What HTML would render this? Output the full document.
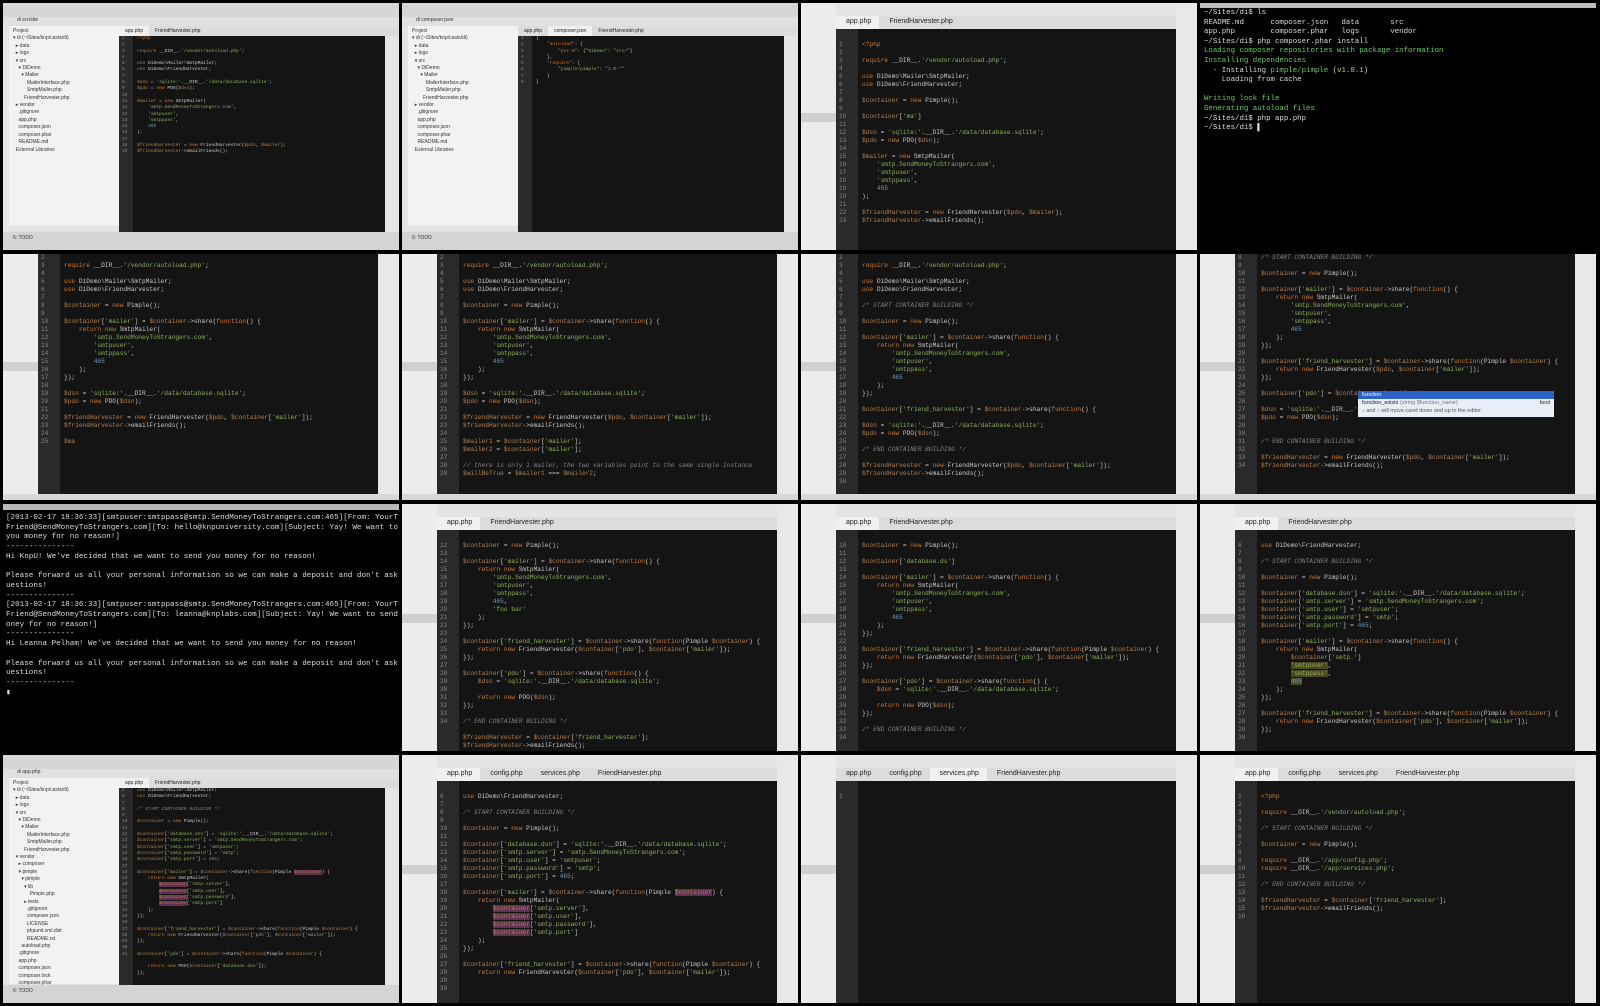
<!DOCTYPE html>
<html><head><meta charset="utf-8"><style>
*{margin:0;padding:0;box-sizing:border-box}
body{width:1600px;height:1006px;background:#000;position:relative;overflow:hidden;font-family:"Liberation Sans",sans-serif}
.c{position:absolute;width:396px;height:247px;overflow:hidden;background:#e4e4e4}
.term{background:#000;color:#ddd;font-family:"Liberation Mono",monospace}
.ls{position:absolute;left:0;top:0;width:35px;height:100%;background:#ececec}
.ls i{position:absolute;left:0;width:35px;height:9px;background:#d0d0d0;top:110px}
.tabs{position:absolute;left:35px;top:13px;right:0;height:13px;background:#dcdcdc;font-size:7px;color:#222}
.tabs span{display:inline-block;padding:2px 8px 0 10px;height:13px}
.tabs span.a{background:#f0f0f0}
.gut{position:absolute;left:35px;width:22px;bottom:6px;background:#2a2a2a;font:6px/8px "Liberation Mono",monospace;color:#888;padding-left:3px;white-space:pre;overflow:hidden}
.code{position:absolute;left:57px;right:21px;bottom:6px;background:#141414;font:6.2px/8px "Liberation Mono",monospace;color:#c8c8c8;padding-left:4px;white-space:pre;overflow:hidden}
.tt{top:26px!important;padding-top:12px;bottom:0!important}
.rs{position:absolute;right:0;top:0;width:21px;height:100%;background:#e8e8e8}
.bb{position:absolute;left:0;right:0;bottom:0;height:6px;background:#d8d8d8}
.k{color:#cc7832}.v{color:#b08050}.s{color:#8fae5a}.m{color:#808080;font-style:italic}.n{color:#6897bb}
.tb{position:absolute;left:0;top:0;width:100%;height:14px;background:#d6d6d6}
.nb{position:absolute;left:0;top:14px;width:100%;height:9px;background:#e0e0e0;font-size:5px;padding-left:14px;color:#333}
.pt{position:absolute;left:6px;top:23px;width:110px;height:200px;background:#f2f2f2;font:5px/7.4px "Liberation Sans",sans-serif;color:#333;padding:2px 0 0 4px;white-space:pre}
.ide .code{left:130px;right:14px;top:33px;bottom:18px;font-size:4.6px;line-height:6.3px}
.ide .gut{left:116px;width:14px;top:33px;bottom:18px;font-size:4.4px;line-height:6.3px}
.ide .tabs{left:116px;top:23px;height:10px;font-size:5px}
.ide .tabs span{padding:2px 6px 0;height:10px}
.sb{position:absolute;left:0;right:0;bottom:0;height:18px;background:#d4d4d4;font-size:5px;padding:3px 10px;color:#333}
</style></head><body>

<!-- Row 1 -->
<div class="c ide" style="left:3px;top:3px">
<div class="tb"></div><div class="nb">di  src/site</div>
<div class="pt">Project
▾ di (~/Sites/knp/casts/di)
  ▸ data
  ▸ logs
  ▾ src
    ▾ DiDemo
      ▾ Mailer
          MailerInterface.php
          SmtpMailer.php
        FriendHarvester.php
  ▸ vendor
    .gitignore
    app.php
    composer.json
    composer.phar
    README.md
  External Libraries</div>
<div class="tabs"><span class="a">app.php</span><span>FriendHarvester.php</span></div>
<div class="gut">1
2
3
4
5
6
7
8
9
10
11
12
13
14
15
16
17
18
19</div>
<div class="code"><span class="k">&lt;?php</span>

<span class="k">require</span> __DIR__.<span class="s">'/vendor/autoload.php'</span>;

<span class="k">use</span> DiDemo\Mailer\SmtpMailer;
<span class="k">use</span> DiDemo\FriendHarvester;

<span class="v">$dsn</span> = <span class="s">'sqlite:'</span>.__DIR__.<span class="s">'/data/database.sqlite'</span>;
<span class="v">$pdo</span> = <span class="k">new</span> PDO(<span class="v">$dsn</span>);

<span class="v">$mailer</span> = <span class="k">new</span> SmtpMailer(
    <span class="s">'smtp.SendMoneyToStrangers.com'</span>,
    <span class="s">'smtpuser'</span>,
    <span class="s">'smtppass'</span>,
    <span class="n">465</span>
);

<span class="v">$friendHarvester</span> = <span class="k">new</span> FriendHarvester(<span class="v">$pdo</span>, <span class="v">$mailer</span>);
<span class="v">$friendHarvester</span>-&gt;emailFriends();</div>
<div class="sb">6: TODO</div>
</div>

<div class="c ide" style="left:402px;top:3px">
<div class="tb"></div><div class="nb">di  composer.json</div>
<div class="pt">Project
▾ di (~/Sites/knp/casts/di)
  ▸ data
  ▸ logs
  ▾ src
    ▾ DiDemo
      ▾ Mailer
          MailerInterface.php
          SmtpMailer.php
        FriendHarvester.php
  ▸ vendor
    .gitignore
    app.php
    composer.json
    composer.phar
    README.md
  External Libraries</div>
<div class="tabs"><span>app.php</span><span class="a">composer.json</span><span>FriendHarvester.php</span></div>
<div class="gut">1
2
3
4
5
6
7
8</div>
<div class="code">{
    <span class="k">"autoload"</span>: {
        <span class="k">"psr-0"</span>: {<span class="s">"DiDemo"</span>: <span class="s">"src/"</span>}
    },
    <span class="k">"require"</span>: {
        <span class="s">"pimple/pimple"</span>: <span class="s">"1.0.*"</span>
    }
}</div>
<div class="sb">6: TODO</div>
</div>

<div class="c" style="left:801px;top:3px">
<div class="ls"><i></i></div><div class="tabs"><span class="a">app.php</span><span>FriendHarvester.php</span></div>
<div class="gut tt">1
2
3
4
5
6
7
8
9
10
11
12
13
14
15
16
17
18
19
20
21
22
23</div>
<div class="code tt"><span class="k">&lt;?php</span>

<span class="k">require</span> __DIR__.<span class="s">'/vendor/autoload.php'</span>;

<span class="k">use</span> DiDemo\Mailer\SmtpMailer;
<span class="k">use</span> DiDemo\FriendHarvester;

<span class="v">$container</span> = <span class="k">new</span> Pimple();

<span class="v">$container</span>[<span class="s">'ma'</span>]

<span class="v">$dsn</span> = <span class="s">'sqlite:'</span>.__DIR__.<span class="s">'/data/database.sqlite'</span>;
<span class="v">$pdo</span> = <span class="k">new</span> PDO(<span class="v">$dsn</span>);

<span class="v">$mailer</span> = <span class="k">new</span> SmtpMailer(
    <span class="s">'smtp.SendMoneyToStrangers.com'</span>,
    <span class="s">'smtpuser'</span>,
    <span class="s">'smtppass'</span>,
    <span class="n">465</span>
);

<span class="v">$friendHarvester</span> = <span class="k">new</span> FriendHarvester(<span class="v">$pdo</span>, <span class="v">$mailer</span>);
<span class="v">$friendHarvester</span>-&gt;emailFriends();</div>
<div class="rs"></div>
</div>

<div class="c term" style="left:1200px;top:3px;font-size:7.4px;line-height:9.6px;padding:6px 4px;white-space:pre"><div style="position:absolute;left:0;top:0;width:100%;height:5px;background:#bbb"></div>~/Sites/di$ ls
README.md      composer.json   data       src
app.php        composer.phar   logs       vendor
~/Sites/di$ php composer.phar install
<span style="color:#6c6">Loading composer repositories with package information
Installing dependencies</span>
  - Installing <span style="color:#6c6">pimple/pimple</span> (<span style="color:#cc6">v1.0.1</span>)
    Loading from cache

<span style="color:#6c6">Writing lock file
Generating autoload files</span>
~/Sites/di$ php app.php
~/Sites/di$ ▌</div>

<!-- Row 2 -->
<div class="c" style="left:3px;top:254px;height:246px">
<div class="ls"><i style="top:108px"></i></div>
<div class="gut" style="top:0">2
3
4
5
6
7
8
9
10
11
12
13
14
15
16
17
18
19
20
21
22
23
24
25</div>
<div class="code" style="top:0">
<span class="k">require</span> __DIR__.<span class="s">'/vendor/autoload.php'</span>;

<span class="k">use</span> DiDemo\Mailer\SmtpMailer;
<span class="k">use</span> DiDemo\FriendHarvester;

<span class="v">$container</span> = <span class="k">new</span> Pimple();

<span class="v">$container</span>[<span class="s">'mailer'</span>] = <span class="v">$container</span>-&gt;share(<span class="k">function</span>() {
    <span class="k">return new</span> SmtpMailer(
        <span class="s">'smtp.SendMoneyToStrangers.com'</span>,
        <span class="s">'smtpuser'</span>,
        <span class="s">'smtppass'</span>,
        <span class="n">465</span>
    );
});

<span class="v">$dsn</span> = <span class="s">'sqlite:'</span>.__DIR__.<span class="s">'/data/database.sqlite'</span>;
<span class="v">$pdo</span> = <span class="k">new</span> PDO(<span class="v">$dsn</span>);

<span class="v">$friendHarvester</span> = <span class="k">new</span> FriendHarvester(<span class="v">$pdo</span>, <span class="v">$container</span>[<span class="s">'mailer'</span>]);
<span class="v">$friendHarvester</span>-&gt;emailFriends();

<span class="v">$ma</span></div>
<div class="rs"></div><div class="bb"></div>
</div>

<div class="c" style="left:402px;top:254px;height:246px">
<div class="ls"><i style="top:108px"></i></div>
<div class="gut" style="top:0">2
3
4
5
6
7
8
9
10
11
12
13
14
15
16
17
18
19
20
21
22
23
24
25
26
27
28
29</div>
<div class="code" style="top:0">
<span class="k">require</span> __DIR__.<span class="s">'/vendor/autoload.php'</span>;

<span class="k">use</span> DiDemo\Mailer\SmtpMailer;
<span class="k">use</span> DiDemo\FriendHarvester;

<span class="v">$container</span> = <span class="k">new</span> Pimple();

<span class="v">$container</span>[<span class="s">'mailer'</span>] = <span class="v">$container</span>-&gt;share(<span class="k">function</span>() {
    <span class="k">return new</span> SmtpMailer(
        <span class="s">'smtp.SendMoneyToStrangers.com'</span>,
        <span class="s">'smtpuser'</span>,
        <span class="s">'smtppass'</span>,
        <span class="n">465</span>
    );
});

<span class="v">$dsn</span> = <span class="s">'sqlite:'</span>.__DIR__.<span class="s">'/data/database.sqlite'</span>;
<span class="v">$pdo</span> = <span class="k">new</span> PDO(<span class="v">$dsn</span>);

<span class="v">$friendHarvester</span> = <span class="k">new</span> FriendHarvester(<span class="v">$pdo</span>, <span class="v">$container</span>[<span class="s">'mailer'</span>]);
<span class="v">$friendHarvester</span>-&gt;emailFriends();

<span class="v">$mailer1</span> = <span class="v">$container</span>[<span class="s">'mailer'</span>];
<span class="v">$mailer2</span> = <span class="v">$container</span>[<span class="s">'mailer'</span>];

<span class="m">// there is only 1 mailer, the two variables point to the same single instance</span>
<span class="v">$willBeTrue</span> = <span class="v">$mailer1</span> === <span class="v">$mailer2</span>;</div>
<div class="rs"></div><div class="bb"></div>
</div>

<div class="c" style="left:801px;top:254px;height:246px">
<div class="ls"><i style="top:108px"></i></div>
<div class="gut" style="top:0">2
3
4
5
6
7
8
9
10
11
12
13
14
15
16
17
18
19
20
21
22
23
24
25
26
27
28
29
30</div>
<div class="code" style="top:0">
<span class="k">require</span> __DIR__.<span class="s">'/vendor/autoload.php'</span>;

<span class="k">use</span> DiDemo\Mailer\SmtpMailer;
<span class="k">use</span> DiDemo\FriendHarvester;

<span class="m">/* START CONTAINER BUILDING */</span>

<span class="v">$container</span> = <span class="k">new</span> Pimple();

<span class="v">$container</span>[<span class="s">'mailer'</span>] = <span class="v">$container</span>-&gt;share(<span class="k">function</span>() {
    <span class="k">return new</span> SmtpMailer(
        <span class="s">'smtp.SendMoneyToStrangers.com'</span>,
        <span class="s">'smtpuser'</span>,
        <span class="s">'smtppass'</span>,
        <span class="n">465</span>
    );
});

<span class="v">$container</span>[<span class="s">'friend_harvester'</span>] = <span class="v">$container</span>-&gt;share(<span class="k">function</span>() {

<span class="v">$dsn</span> = <span class="s">'sqlite:'</span>.__DIR__.<span class="s">'/data/database.sqlite'</span>;
<span class="v">$pdo</span> = <span class="k">new</span> PDO(<span class="v">$dsn</span>);

<span class="m">/* END CONTAINER BUILDING */</span>

<span class="v">$friendHarvester</span> = <span class="k">new</span> FriendHarvester(<span class="v">$pdo</span>, <span class="v">$container</span>[<span class="s">'mailer'</span>]);
<span class="v">$friendHarvester</span>-&gt;emailFriends();
</div>
<div class="rs"></div><div class="bb"></div>
</div>

<div class="c" style="left:1200px;top:254px;height:246px">
<div class="ls"><i style="top:108px"></i></div>
<div class="gut" style="top:0">8
9
10
11
12
13
14
15
16
17
18
19
20
21
22
23
24
25
26
27
28
29
30
31
32
33
34</div>
<div class="code" style="top:0"><span class="m">/* START CONTAINER BUILDING */</span>

<span class="v">$container</span> = <span class="k">new</span> Pimple();

<span class="v">$container</span>[<span class="s">'mailer'</span>] = <span class="v">$container</span>-&gt;share(<span class="k">function</span>() {
    <span class="k">return new</span> SmtpMailer(
        <span class="s">'smtp.SendMoneyToStrangers.com'</span>,
        <span class="s">'smtpuser'</span>,
        <span class="s">'smtppass'</span>,
        <span class="n">465</span>
    );
});

<span class="v">$container</span>[<span class="s">'friend_harvester'</span>] = <span class="v">$container</span>-&gt;share(<span class="k">function</span>(Pimple <span class="v">$container</span>) {
    <span class="k">return new</span> FriendHarvester(<span class="v">$pdo</span>, <span class="v">$container</span>[<span class="s">'mailer'</span>]);
});

<span class="v">$container</span>[<span class="s">'pdo'</span>] = <span class="v">$container</span>-&gt;share(<span class="k">function</span>

<span class="v">$dsn</span> = <span class="s">'sqlite:'</span>.__DIR__.<span class="s">'/data/</span>
<span class="v">$pdo</span> = <span class="k">new</span> PDO(<span class="v">$dsn</span>);


<span class="m">/* END CONTAINER BUILDING */</span>

<span class="v">$friendHarvester</span> = <span class="k">new</span> FriendHarvester(<span class="v">$pdo</span>, <span class="v">$container</span>[<span class="s">'mailer'</span>]);
<span class="v">$friendHarvester</span>-&gt;emailFriends();</div>
<div style="position:absolute;left:158px;top:137px;width:196px;height:26px;background:#e8eef8;font-size:5.5px;line-height:8px;color:#222;padding-left:4px"><div style="background:#2a62c8;color:#fff;margin-left:-4px;padding-left:4px">function</div>function_exists <span style="color:#777">(string $function_name)</span><span style="float:right;padding-right:4px">bool</span><div style="color:#555">↓ and ↑ will move caret down and up in the editor</div></div>
<div class="rs"></div><div class="bb"></div>
</div>

<!-- Row 3 -->
<div class="c term" style="left:3px;top:504px;font-size:7.6px;line-height:9.7px;padding:10px 4px 0 3px;white-space:pre"><div style="position:absolute;left:0;top:0;width:100%;height:6px;background:#b8b8b8"></div>[2013-02-17 18:36:33][smtpuser:smtppass@smtp.SendMoneyToStrangers.com:465][From: YourTrusted
Friend@SendMoneyToStrangers.com][To: hello@knpuniversity.com][Subject: Yay! We want to send
you money for no reason!]
---------------
Hi KnpU! We've decided that we want to send you money for no reason!

Please forward us all your personal information so we can make a deposit and don't ask any q
uestions!
---------------
[2013-02-17 18:36:33][smtpuser:smtppass@smtp.SendMoneyToStrangers.com:465][From: YourTrusted
Friend@SendMoneyToStrangers.com][To: leanna@knplabs.com][Subject: Yay! We want to send you m
oney for no reason!]
---------------
Hi Leanna Pelham! We've decided that we want to send you money for no reason!

Please forward us all your personal information so we can make a deposit and don't ask any q
uestions!
---------------
▮</div>

<div class="c" style="left:402px;top:504px">
<div class="ls"><i></i></div><div class="tabs"><span class="a">app.php</span><span>FriendHarvester.php</span></div>
<div class="gut tt">12
13
14
15
16
17
18
19
20
21
22
23
24
25
26
27
28
29
30
31
32
33
34</div>
<div class="code tt"><span class="v">$container</span> = <span class="k">new</span> Pimple();

<span class="v">$container</span>[<span class="s">'mailer'</span>] = <span class="v">$container</span>-&gt;share(<span class="k">function</span>() {
    <span class="k">return new</span> SmtpMailer(
        <span class="s">'smtp.SendMoneyToStrangers.com'</span>,
        <span class="s">'smtpuser'</span>,
        <span class="s">'smtppass'</span>,
        <span class="n">465</span>,
        <span class="s">'foo bar'</span>
    );
});

<span class="v">$container</span>[<span class="s">'friend_harvester'</span>] = <span class="v">$container</span>-&gt;share(<span class="k">function</span>(Pimple <span class="v">$container</span>) {
    <span class="k">return new</span> FriendHarvester(<span class="v">$container</span>[<span class="s">'pdo'</span>], <span class="v">$container</span>[<span class="s">'mailer'</span>]);
});

<span class="v">$container</span>[<span class="s">'pdo'</span>] = <span class="v">$container</span>-&gt;share(<span class="k">function</span>() {
    <span class="v">$dsn</span> = <span class="s">'sqlite:'</span>.__DIR__.<span class="s">'/data/database.sqlite'</span>;

    <span class="k">return new</span> PDO(<span class="v">$dsn</span>);
});

<span class="m">/* END CONTAINER BUILDING */</span>

<span class="v">$friendHarvester</span> = <span class="v">$container</span>[<span class="s">'friend_harvester'</span>];
<span class="v">$friendHarvester</span>-&gt;emailFriends();</div>
<div class="rs"></div>
</div>

<div class="c" style="left:801px;top:504px">
<div class="ls"><i></i></div><div class="tabs"><span class="a">app.php</span><span>FriendHarvester.php</span></div>
<div class="gut tt">10
11
12
13
14
15
16
17
18
19
20
21
22
23
24
25
26
27
28
29
30
31
32
33
34</div>
<div class="code tt"><span class="v">$container</span> = <span class="k">new</span> Pimple();

<span class="v">$container</span>[<span class="s">'database.ds'</span>]

<span class="v">$container</span>[<span class="s">'mailer'</span>] = <span class="v">$container</span>-&gt;share(<span class="k">function</span>() {
    <span class="k">return new</span> SmtpMailer(
        <span class="s">'smtp.SendMoneyToStrangers.com'</span>,
        <span class="s">'smtpuser'</span>,
        <span class="s">'smtppass'</span>,
        <span class="n">465</span>
    );
});

<span class="v">$container</span>[<span class="s">'friend_harvester'</span>] = <span class="v">$container</span>-&gt;share(<span class="k">function</span>(Pimple <span class="v">$container</span>) {
    <span class="k">return new</span> FriendHarvester(<span class="v">$container</span>[<span class="s">'pdo'</span>], <span class="v">$container</span>[<span class="s">'mailer'</span>]);
});

<span class="v">$container</span>[<span class="s">'pdo'</span>] = <span class="v">$container</span>-&gt;share(<span class="k">function</span>() {
    <span class="v">$dsn</span> = <span class="s">'sqlite:'</span>.__DIR__.<span class="s">'/data/database.sqlite'</span>;

    <span class="k">return new</span> PDO(<span class="v">$dsn</span>);
});

<span class="m">/* END CONTAINER BUILDING */</span>
</div>
<div class="rs"></div>
</div>

<div class="c" style="left:1200px;top:504px">
<div class="ls"><i></i></div><div class="tabs"><span class="a">app.php</span><span>FriendHarvester.php</span></div>
<div class="gut tt">6
7
8
9
10
11
12
13
14
15
16
17
18
19
20
21
22
23
24
25
26
27
28
29
30</div>
<div class="code tt"><span class="k">use</span> DiDemo\FriendHarvester;

<span class="m">/* START CONTAINER BUILDING */</span>

<span class="v">$container</span> = <span class="k">new</span> Pimple();

<span class="v">$container</span>[<span class="s">'database.dsn'</span>] = <span class="s">'sqlite:'</span>.__DIR__.<span class="s">'/data/database.sqlite'</span>;
<span class="v">$container</span>[<span class="s">'smtp.server'</span>] = <span class="s">'smtp.SendMoneyToStrangers.com'</span>;
<span class="v">$container</span>[<span class="s">'smtp.user'</span>] = <span class="s">'smtpuser'</span>;
<span class="v">$container</span>[<span class="s">'smtp.password'</span>] = <span class="s">'smtp'</span>;
<span class="v">$container</span>[<span class="s">'smtp.port'</span>] = <span class="n">465</span>;

<span class="v">$container</span>[<span class="s">'mailer'</span>] = <span class="v">$container</span>-&gt;share(<span class="k">function</span>() {
    <span class="k">return new</span> SmtpMailer(
        <span class="v">$container</span>[<span class="s">'smtp.'</span>]
        <span class="s" style="background:#4a4a20">'smtpuser'</span>,
        <span class="s" style="background:#4a4a20">'smtppass'</span>,
        <span class="n" style="background:#4a4a20">465</span>
    );
});

<span class="v">$container</span>[<span class="s">'friend_harvester'</span>] = <span class="v">$container</span>-&gt;share(<span class="k">function</span>(Pimple <span class="v">$container</span>) {
    <span class="k">return new</span> FriendHarvester(<span class="v">$container</span>[<span class="s">'pdo'</span>], <span class="v">$container</span>[<span class="s">'mailer'</span>]);
});
</div>
<div class="rs"></div>
</div>

<!-- Row 4 -->
<div class="c ide" style="left:3px;top:755px;height:248px">
<div class="tb"></div><div class="nb">di  app.php</div>
<div class="pt" style="height:206px">Project
▾ di (~/Sites/knp/casts/di)
  ▸ data
  ▸ logs
  ▾ src
    ▾ DiDemo
      ▾ Mailer
          MailerInterface.php
          SmtpMailer.php
        FriendHarvester.php
  ▾ vendor
    ▸ composer
    ▾ pimple
      ▾ pimple
        ▾ lib
            Pimple.php
        ▸ tests
          .gitignore
          composer.json
          LICENSE
          phpunit.xml.dist
          README.rst
      autoload.php
    .gitignore
    app.php
    composer.json
    composer.lock
    composer.phar</div>
<div class="tabs"><span class="a">app.php</span><span>FriendHarvester.php</span></div>
<div class="gut">5
6
7
8
9
10
11
12
13
14
15
16
17
18
19
20
21
22
23
24
25
26
27
28
29
30
31</div>
<div class="code"><span class="k">use</span> DiDemo\Mailer\SmtpMailer;
<span class="k">use</span> DiDemo\FriendHarvester;

<span class="m">/* START CONTAINER BUILDING */</span>

<span class="v">$container</span> = <span class="k">new</span> Pimple();

<span class="v">$container</span>[<span class="s">'database.dsn'</span>] = <span class="s">'sqlite:'</span>.__DIR__.<span class="s">'/data/database.sqlite'</span>;
<span class="v">$container</span>[<span class="s">'smtp.server'</span>] = <span class="s">'smtp.SendMoneyToStrangers.com'</span>;
<span class="v">$container</span>[<span class="s">'smtp.user'</span>] = <span class="s">'smtpuser'</span>;
<span class="v">$container</span>[<span class="s">'smtp.password'</span>] = <span class="s">'smtp'</span>;
<span class="v">$container</span>[<span class="s">'smtp.port'</span>] = <span class="n">465</span>;

<span class="v">$container</span>[<span class="s">'mailer'</span>] = <span class="v">$container</span>-&gt;share(<span class="k">function</span>(Pimple <span class="v" style="background:#603050">$container</span>) {
    <span class="k">return new</span> SmtpMailer(
        <span class="v" style="background:#603050">$container</span>[<span class="s">'smtp.server'</span>],
        <span class="v" style="background:#603050">$container</span>[<span class="s">'smtp.user'</span>],
        <span class="v" style="background:#603050">$container</span>[<span class="s">'smtp.password'</span>],
        <span class="v" style="background:#603050">$container</span>[<span class="s">'smtp.port'</span>]
    );
});

<span class="v">$container</span>[<span class="s">'friend_harvester'</span>] = <span class="v">$container</span>-&gt;share(<span class="k">function</span>(Pimple <span class="v">$container</span>) {
    <span class="k">return new</span> FriendHarvester(<span class="v">$container</span>[<span class="s">'pdo'</span>], <span class="v">$container</span>[<span class="s">'mailer'</span>]);
});

<span class="v">$container</span>[<span class="s">'pdo'</span>] = <span class="v">$container</span>-&gt;share(<span class="k">function</span>(Pimple <span class="v">$container</span>) {

    <span class="k">return new</span> PDO(<span class="v">$container</span>[<span class="s">'database.dsn'</span>]);
});</div>
<div class="sb">6: TODO</div>
</div>

<div class="c" style="left:402px;top:755px;height:248px">
<div class="ls"><i></i></div><div class="tabs"><span class="a">app.php</span><span>config.php</span><span>services.php</span><span>FriendHarvester.php</span></div>
<div class="gut tt">6
7
8
9
10
11
12
13
14
15
16
17
18
19
20
21
22
23
24
25
26
27
28
29
30</div>
<div class="code tt"><span class="k">use</span> DiDemo\FriendHarvester;

<span class="m">/* START CONTAINER BUILDING */</span>

<span class="v">$container</span> = <span class="k">new</span> Pimple();

<span class="v">$container</span>[<span class="s">'database.dsn'</span>] = <span class="s">'sqlite:'</span>.__DIR__.<span class="s">'/data/database.sqlite'</span>;
<span class="v">$container</span>[<span class="s">'smtp.server'</span>] = <span class="s">'smtp.SendMoneyToStrangers.com'</span>;
<span class="v">$container</span>[<span class="s">'smtp.user'</span>] = <span class="s">'smtpuser'</span>;
<span class="v">$container</span>[<span class="s">'smtp.password'</span>] = <span class="s">'smtp'</span>;
<span class="v">$container</span>[<span class="s">'smtp.port'</span>] = <span class="n">465</span>;

<span class="v">$container</span>[<span class="s">'mailer'</span>] = <span class="v">$container</span>-&gt;share(<span class="k">function</span>(Pimple <span class="v" style="background:#603050">$container</span>) {
    <span class="k">return new</span> SmtpMailer(
        <span class="v" style="background:#603050">$container</span>[<span class="s">'smtp.server'</span>],
        <span class="v" style="background:#603050">$container</span>[<span class="s">'smtp.user'</span>],
        <span class="v" style="background:#603050">$container</span>[<span class="s">'smtp.password'</span>],
        <span class="v" style="background:#603050">$container</span>[<span class="s">'smtp.port'</span>]
    );
});

<span class="v">$container</span>[<span class="s">'friend_harvester'</span>] = <span class="v">$container</span>-&gt;share(<span class="k">function</span>(Pimple <span class="v">$container</span>) {
    <span class="k">return new</span> FriendHarvester(<span class="v">$container</span>[<span class="s">'pdo'</span>], <span class="v">$container</span>[<span class="s">'mailer'</span>]);
</div>
<div class="rs"></div>
</div>

<div class="c" style="left:801px;top:755px;height:248px">
<div class="ls"><i></i></div><div class="tabs"><span>app.php</span><span>config.php</span><span class="a">services.php</span><span>FriendHarvester.php</span></div>
<div class="gut tt">1</div>
<div class="code tt"></div>
<div class="rs"></div>
</div>

<div class="c" style="left:1200px;top:755px;height:248px">
<div class="ls"><i></i></div><div class="tabs"><span class="a">app.php</span><span>config.php</span><span>services.php</span><span>FriendHarvester.php</span></div>
<div class="gut tt">1
2
3
4
5
6
7
8
9
10
11
12
13
14
15
16</div>
<div class="code tt"><span class="k">&lt;?php</span>

<span class="k">require</span> __DIR__.<span class="s">'/vendor/autoload.php'</span>;

<span class="m">/* START CONTAINER BUILDING */</span>

<span class="v">$container</span> = <span class="k">new</span> Pimple();

<span class="k">require</span> __DIR__.<span class="s">'/app/config.php'</span>;
<span class="k">require</span> __DIR__.<span class="s">'/app/services.php'</span>;

<span class="m">/* END CONTAINER BUILDING */</span>

<span class="v">$friendHarvester</span> = <span class="v">$container</span>[<span class="s">'friend_harvester'</span>];
<span class="v">$friendHarvester</span>-&gt;emailFriends();
</div>
<div class="rs"></div>
</div>

</body></html>
